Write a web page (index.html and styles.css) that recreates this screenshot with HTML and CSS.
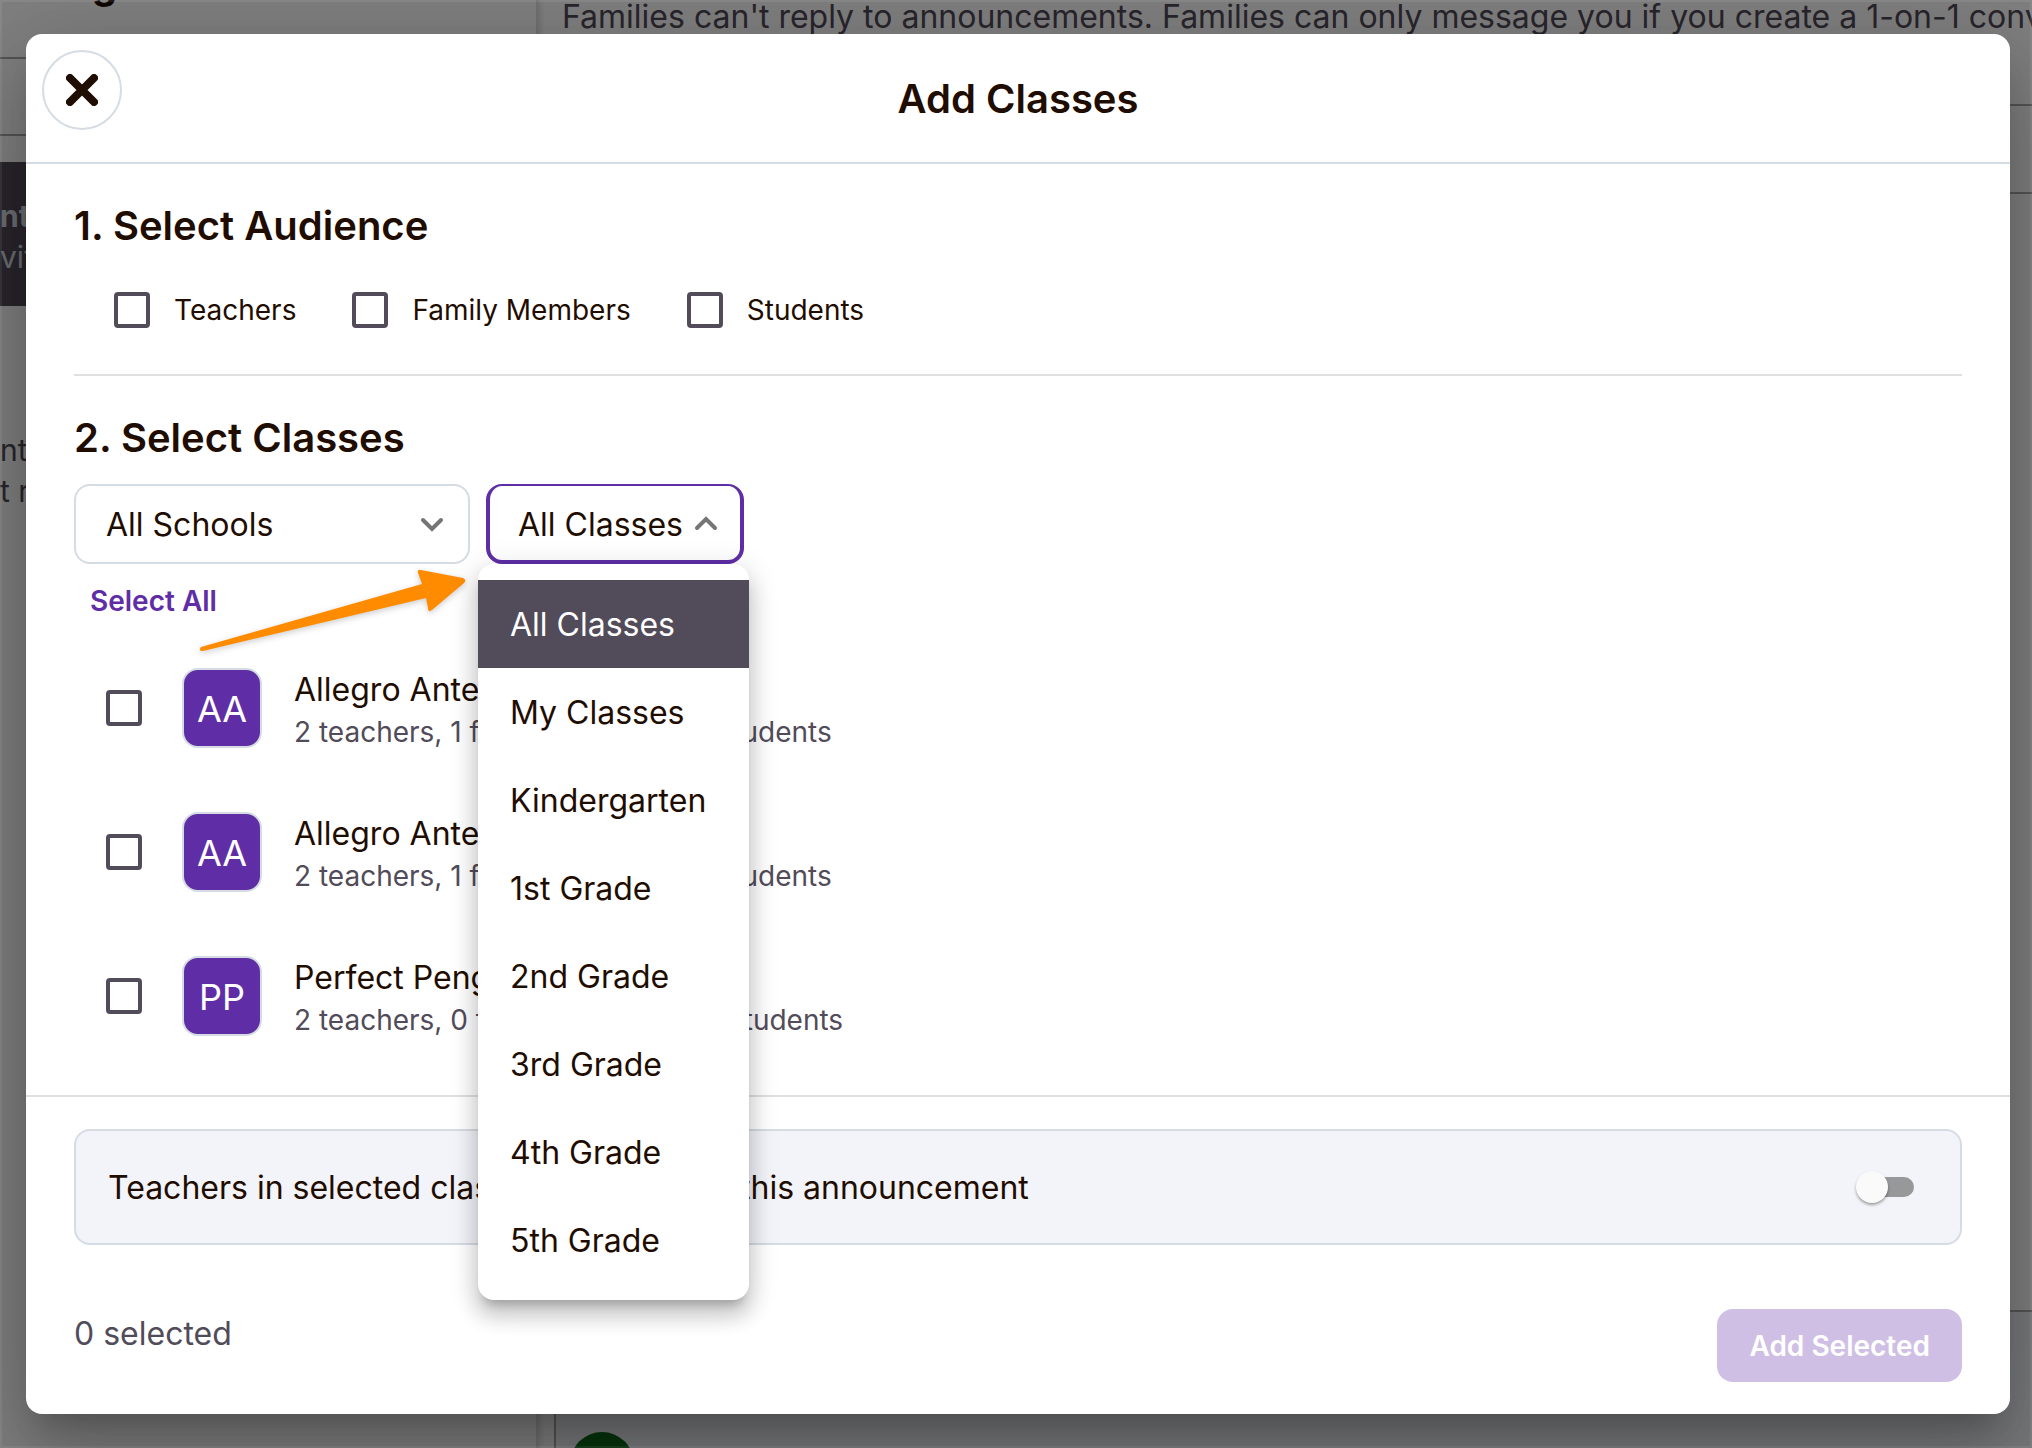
FILE: index.html
```
<!DOCTYPE html>
<html lang="en">

<head>
    <meta charset="UTF-8">
    <title>Add Classes</title>

    <link rel="stylesheet" href="styles.css">
</head>

<body>
<!-- Page behind the dialog -->
<div class="page">
    <div class="sidebar">
        <div class="sidebar-top">g</div>
        <div class="sidebar-search"></div>
        <div class="sidebar-gap"></div>
        <div class="thread active">
            <b>nt</b>
            <span>vit</span>
        </div>
        <div class="thread">
            <span>nt</span>
            <span>t r</span>
        </div>
    </div>
    <div class="content">
        <p class="notice">Families can't reply to announcements. Families can only message you if you create a 1-on-1 conversation.</p>
        <div class="toolbar"></div>
        <div class="feed"></div>
        <div class="composer"><span class="dot"></span></div>
    </div>
</div>

<div class="overlay">
    <div class="modal" role="dialog" aria-labelledby="title">
        <div class="modal-header">
            <button class="close" aria-label="Close">
                <svg width="32" height="32" viewBox="0 0 32 32"><path d="M4 4L28 28M28 4L4 28"/></svg>
            </button>
            <h1 id="title">Add Classes</h1>
        </div>

        <div class="modal-body">
            <h2>1. Select Audience</h2>
            <div class="audience">
                <label><input type="checkbox">Teachers</label>
                <label><input type="checkbox">Family Members</label>
                <label><input type="checkbox">Students</label>
            </div>

            <h2>2. Select Classes</h2>
            <div class="filters">
                <button class="picker schools">All Schools
                    <svg width="24" height="16" viewBox="0 0 24 16"><path d="M3 4L12 13L21 4"/></svg>
                </button>
                <div class="picker-wrap">
                    <button class="picker open" aria-expanded="true">All Classes
                        <svg width="24" height="16" viewBox="0 0 24 16"><path d="M3 12L12 3L21 12"/></svg>
                    </button>
                    <div class="menu">
                        <button class="selected">All Classes</button>
                        <button>My Classes</button>
                        <button>Kindergarten</button>
                        <button>1st Grade</button>
                        <button>2nd Grade</button>
                        <button>3rd Grade</button>
                        <button>4th Grade</button>
                        <button>5th Grade</button>
                    </div>
                </div>
                <svg class="arrow" width="272" height="90" viewBox="0 0 272 90"><path d="M3 79L224 16L220 5Q219 1 223 2L265 10Q269 12 266 15L234 42Q230 45 230 40L228 30L5 83Q0 83 3 79Z"/></svg>
            </div>
            <button class="select-all">Select All</button>

            <label class="class-row">
                <input type="checkbox">
                <span class="avatar">AA</span>
                <span class="info">
                    <span class="name">Allegro Antelopes</span>
                    <span class="counts">2 teachers, 1 family member, 10 students</span>
                </span>
            </label>
            <label class="class-row">
                <input type="checkbox">
                <span class="avatar">AA</span>
                <span class="info">
                    <span class="name">Allegro Antelopes</span>
                    <span class="counts">2 teachers, 1 family member, 10 students</span>
                </span>
            </label>
            <label class="class-row">
                <input type="checkbox">
                <span class="avatar">PP</span>
                <span class="info">
                    <span class="name">Perfect Penguins</span>
                    <span class="counts">2 teachers, 0 family members, 0 students</span>
                </span>
            </label>
        </div>

        <div class="modal-footer">
            <label class="option">
                Teachers in selected classes can reply to this announcement
                <input type="checkbox" class="toggle" role="switch">
            </label>
            <div class="actions">
                <span>0 selected</span>
                <button class="add" disabled>Add Selected</button>
            </div>
        </div>
    </div>
</div>
</body>

</html>
```

FILE: styles.css
```
* {
    box-sizing: border-box;
}

body {
    margin: 0;
    height: 100vh;
    overflow: hidden;
    position: relative;
    font-family: Inter, "Open Sans", sans-serif;
    font-size: 32px;
    color: #1f0d02;
}

h1, h2, p {
    margin: 0;
}

button {
    font: inherit;
    color: inherit;
    background: none;
    border: none;
    padding: 0;
    text-align: left;
}

/* page behind the dialog */
.page {
    display: flex;
    height: 100vh;
    background: #fff;
    color: #524b59;
}

.sidebar {
    width: 538px;
    border-right: 2px solid #e0e0e0;
    box-shadow: 2px 0 6px rgba(0, 0, 0, 0.15);
    flex-shrink: 0;
}

.sidebar-top {
    height: 76px;
    margin-top: -17px;
    border-bottom: 2px solid #a8a8a8;
    padding-left: 92px;
    font-size: 40px;
    font-weight: bold;
    line-height: 1px;
    color: #1f0d02;
}

.sidebar-search {
    height: 77px;
    border-bottom: 2px solid #a8a8a8;
}

.sidebar-gap {
    height: 26px;
}

.thread {
    height: 144px;
    padding-top: 34px;
    display: flex;
    flex-direction: column;
    line-height: 41px;
    font-size: 30px;
}

.thread.active {
    background: #524b59;
    color: #d6dce4;
    margin-bottom: 90px;
}

.content {
    flex: 1;
    min-width: 0;
    display: flex;
    flex-direction: column;
}

.notice {
    height: 106px;
    padding-left: 24px;
    line-height: 34px;
    white-space: nowrap;
    overflow: hidden;
    border-bottom: 2px solid #a8a8a8;
}

.toolbar {
    height: 88px;
    border-bottom: 2px solid #a8a8a8;
}

.feed {
    flex: 1;
    border-bottom: 2px solid #a8a8a8;
}

.composer {
    height: 136px;
    margin-left: 16px;
    padding: 120px 0 0 14px;
    border-left: 2px solid #a8a8a8;
    background: #f3f4f9;
    overflow: hidden;
}

.dot {
    display: block;
    width: 64px;
    height: 64px;
    border-radius: 50%;
    background: #0f6b1c;
}

/* dialog */
.overlay {
    position: absolute;
    inset: 0;
    padding: 34px 22px 34px 26px;
    background: rgba(0, 0, 0, 0.5);
    box-shadow: inset 0 0 0 2px rgba(255, 255, 255, 0.08);
}

.modal {
    height: 100%;
    display: flex;
    flex-direction: column;
    background: #fff;
    border-radius: 16px;
    box-shadow: 0 22px 30px -14px rgba(0, 0, 0, 0.2), 0 48px 76px 6px rgba(0, 0, 0, 0.14), 0 18px 92px 16px rgba(0, 0, 0, 0.12);
}

.modal-header {
    height: 130px;
    padding: 16px;
    display: grid;
    grid-template-columns: 80px 1fr 80px;
    border-bottom: 2px solid #d6dce4;
}

.close {
    width: 80px;
    height: 80px;
    border: 2px solid #d6dce4;
    border-radius: 50%;
    display: flex;
    align-items: center;
    justify-content: center;
}

.close path {
    fill: none;
    stroke: #1f0d02;
    stroke-width: 8;
    stroke-linecap: round;
}

h1 {
    font-size: 40px;
    font-weight: 600;
    line-height: 98px;
    text-align: center;
}

h2 {
    font-size: 40px;
    font-weight: 600;
    line-height: 48px;
}

.modal-body {
    flex: 1;
    padding: 38px 48px 0;
}

input[type="checkbox"] {
    appearance: none;
    margin: 0;
    width: 36px;
    height: 36px;
    border: 4px solid #524b59;
    border-radius: 4px;
    flex-shrink: 0;
}

.audience {
    display: flex;
    gap: 56px;
    height: 126px;
    padding: 42px 0 0 40px;
    margin-bottom: 38px;
    font-size: 28px;
    line-height: 36px;
    border-bottom: 2px solid #e0e0e0;
}

.audience label {
    display: flex;
    gap: 24px;
}

.filters {
    position: relative;
    display: flex;
    gap: 16px;
    margin-top: 22px;
}

.picker {
    height: 80px;
    padding: 0 22px 0 30px;
    display: flex;
    align-items: center;
    justify-content: space-between;
    border: 2px solid #d6dce4;
    border-radius: 16px;
}

.schools {
    width: 396px;
    padding-right: 24px;
}

.picker path {
    fill: none;
    stroke: #757575;
    stroke-width: 4;
    stroke-linecap: round;
}

.picker.open {
    width: 258px;
    border: 4px solid #5f2ea6;
    border-top-width: 2px;
    padding-top: 2px;
    padding-left: 28px;
}

.picker-wrap {
    position: relative;
}

.menu {
    position: absolute;
    top: 80px;
    left: -8px;
    z-index: 1;
    width: 271px;
    padding: 16px 0;
    display: flex;
    flex-direction: column;
    background: #fff;
    border-radius: 16px;
    box-shadow: 0 10px 10px -6px rgba(0, 0, 0, 0.2), 0 16px 20px 2px rgba(0, 0, 0, 0.14), 0 6px 28px 4px rgba(0, 0, 0, 0.12);
}

.menu button {
    height: 88px;
    padding: 0 32px;
}

.menu .selected {
    background: #524b59;
    color: #fff;
}

.arrow {
    position: absolute;
    left: 124px;
    top: 84px;
    fill: #ff8c00;
    filter: drop-shadow(0 2px 3px rgba(0, 0, 0, 0.2));
}

.select-all {
    display: block;
    margin: 16px 0 46px 16px;
    font-size: 28px;
    font-weight: 600;
    line-height: 42px;
    color: #5f2ea6;
}

.class-row {
    display: flex;
    align-items: center;
    height: 80px;
    padding-left: 32px;
}

.class-row + .class-row {
    margin-top: 64px;
}

.avatar {
    width: 80px;
    height: 80px;
    margin: 0 32px 0 40px;
    border: 2px solid #d6dce4;
    border-radius: 16px;
    background: #5f2ea6;
    color: #fff;
    font-size: 36px;
    line-height: 78px;
    text-align: center;
}

.info {
    display: flex;
    flex-direction: column;
    padding-top: 5px;
    line-height: 43px;
}

.counts {
    font-size: 28px;
    color: #524b59;
}

.modal-footer {
    padding: 32px 48px;
    border-top: 2px solid #e0e0e0;
}

.option {
    display: flex;
    align-items: center;
    justify-content: space-between;
    height: 116px;
    padding: 0 46px 0 32px;
    background: #f3f4f9;
    border: 2px solid #d6dce4;
    border-radius: 16px;
}

.option .toggle {
    width: 54px;
    height: 20px;
    border: none;
    border-radius: 10px;
    background: #979899;
    display: flex;
    align-items: center;
}

.toggle::before {
    content: "";
    width: 32px;
    height: 32px;
    margin-left: -4px;
    border-radius: 50%;
    background: #fafafa;
    box-shadow: 0 2px 3px rgba(0, 0, 0, 0.35);
    flex-shrink: 0;
}

.actions {
    display: flex;
    justify-content: space-between;
    margin-top: 64px;
    line-height: 50px;
    color: #524b59;
}

.add {
    height: 73px;
    padding: 0 32px;
    border-radius: 16px;
    background: #d0bfe5;
    color: #fff;
    font-size: 28px;
    font-weight: 600;
}
```
